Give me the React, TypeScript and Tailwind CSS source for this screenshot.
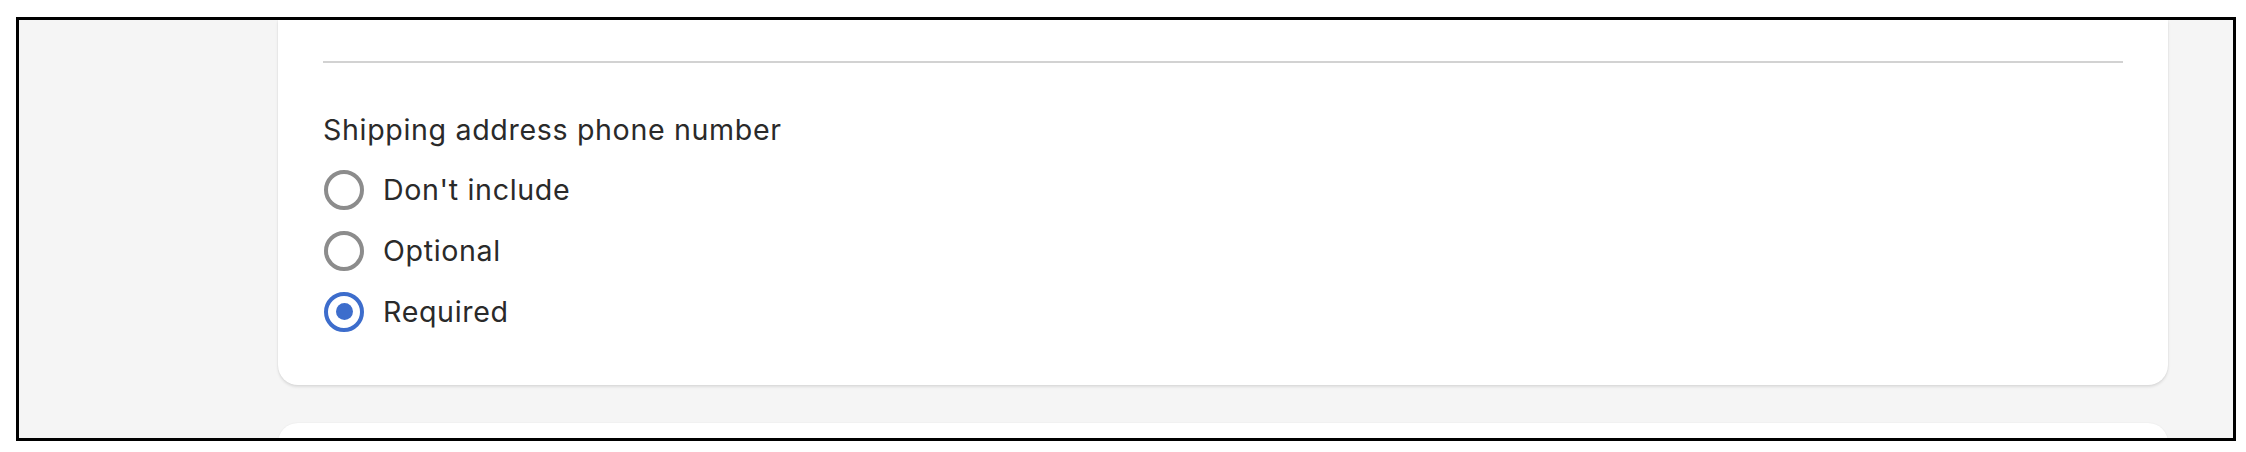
import React from 'react';

type Choice = { label: string; value: string };

const choices: Choice[] = [
  { label: "Don't include", value: 'none' },
  { label: 'Optional', value: 'optional' },
  { label: 'Required', value: 'required' },
];

const Radio: React.FC<{ checked: boolean }> = ({ checked }) =>
  checked ? (
    <span className="flex h-[40px] w-[40px] shrink-0 items-center justify-center rounded-full border-[4px] border-[#3d6dcc] bg-white">
      <span className="h-[17px] w-[17px] rounded-full bg-[#3d6dcc]" />
    </span>
  ) : (
    <span className="h-[40px] w-[40px] shrink-0 rounded-full border-[4px] border-[#8c8c8c] bg-white" />
  );

export default function App() {
  const [selected, setSelected] = React.useState('required');

  return (
    <div className="h-[452px] w-[2246px] bg-white pl-[16px] pt-[17px]">
      <div className="flex h-[424px] w-[2220px] flex-col gap-[38px] overflow-hidden border-[3px] border-black bg-[#f5f5f5] pl-[259px] font-['Inter',sans-serif] text-[28.6px] leading-[44px] tracking-[0.65px] text-[#2a2a2a]">
        {/* Card */}
        <div className="w-[1890px] shrink-0 rounded-b-[20px] bg-white px-[45px] pt-[41px] pb-[43px] shadow-[0_2px_3px_rgba(0,0,0,0.10),0_0_2px_rgba(0,0,0,0.07)]">
          <div className="h-[2px] bg-[#d2d2d2]" />
          <p className="mt-[45px]">Shipping address phone number</p>
          <div className="mt-[7px] flex flex-col">
            {choices.map((c) => (
              <label
                key={c.value}
                className="flex h-[61px] cursor-pointer items-center gap-[19px] pl-[1px]"
                onClick={() => setSelected(c.value)}
              >
                <Radio checked={selected === c.value} />
                <span>{c.label}</span>
              </label>
            ))}
          </div>
        </div>

        {/* Next card (cut off) */}
        <div className="h-[60px] w-[1890px] shrink-0 rounded-t-[20px] bg-white shadow-[0_0_2px_rgba(0,0,0,0.07)]" />
      </div>
    </div>
  );
}
